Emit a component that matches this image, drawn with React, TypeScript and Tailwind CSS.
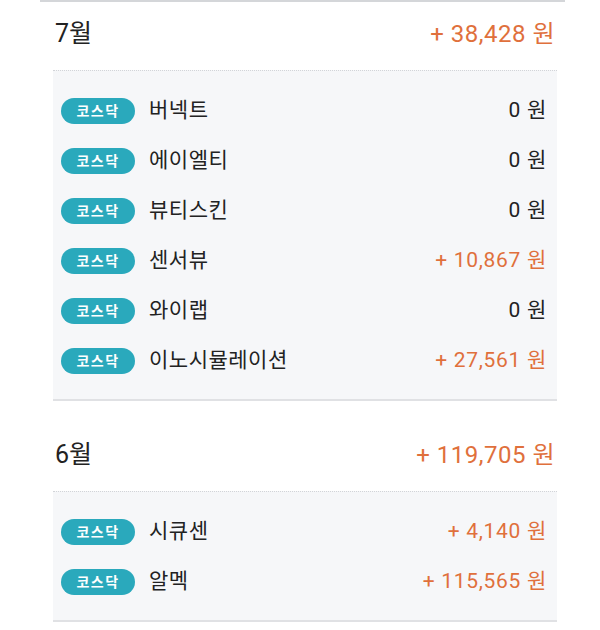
import React from "react";

type Row = { name: string; amount: number };
type Section = { month: string; total: string; rows: Row[] };

const sections: Section[] = [
  {
    month: "7월",
    total: "+ 38,428 원",
    rows: [
      { name: "버넥트", amount: 0 },
      { name: "에이엘티", amount: 0 },
      { name: "뷰티스킨", amount: 0 },
      { name: "센서뷰", amount: 10867 },
      { name: "와이랩", amount: 0 },
      { name: "이노시뮬레이션", amount: 27561 },
    ],
  },
  {
    month: "6월",
    total: "+ 119,705 원",
    rows: [
      { name: "시큐센", amount: 4140 },
      { name: "알멕", amount: 115565 },
    ],
  },
];

const font = { fontFamily: "Roboto, 'Noto Sans CJK KR', sans-serif" };

export default function App() {
  return (
    <div className="w-[600px] h-[630px] bg-white overflow-hidden" style={font}>
      <div className="ml-[40px] w-[525px] h-[2px] bg-[#d4d6d9]" />
      <div className="flex flex-col gap-[20px] -mt-[2px]">
        {sections.map((s) => (
          <div key={s.month} className="flex flex-col">
            <div className="h-[70px] flex items-center justify-between pl-[55px] pr-[45px]">
              <span className="text-[25px] text-[#222] leading-none -mt-[3px]">{s.month}</span>
              <span className="text-[24px] tracking-[0.5px] text-[#e0703c] leading-none -mt-[3px]">{s.total}</span>
            </div>
            <div className="ml-[53px] w-[504px] bg-[#f6f7f9]">
              <div className="border-t border-dotted border-[#d2d4d8]" />
              <div className="py-[15px] pl-[8px] pr-[10px]">
                {s.rows.map((r) => (
                  <div key={r.name} className="h-[50px] flex items-center justify-between">
                    <div className="flex items-center gap-[14px]">
                      <span className="w-[74px] h-[26px] rounded-full bg-[#2aa9bc] text-white text-[14px] font-bold flex items-center justify-center tracking-[1.5px]">
                        코스닥
                      </span>
                      <span className="text-[21px] tracking-[0.5px] text-[#222] -mt-[1px]">{r.name}</span>
                    </div>
                    <span
                      className={
                        "text-[21px] tracking-[0.7px] " + (r.amount > 0 ? "text-[#e0703c]" : "text-[#222]")
                      }
                    >
                      {r.amount > 0 ? `+ ${r.amount.toLocaleString("en-US")} 원` : "0 원"}
                    </span>
                  </div>
                ))}
              </div>
              <div className="h-[2px] bg-[#e0e1e4] -mt-[2px]" />
            </div>
          </div>
        ))}
      </div>
    </div>
  );
}
